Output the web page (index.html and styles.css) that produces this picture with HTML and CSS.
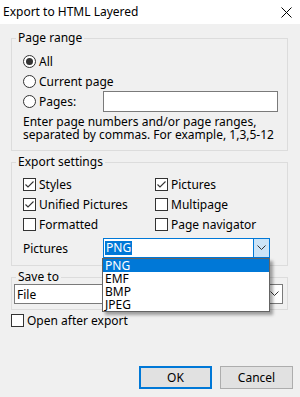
FILE: index.html
```html
<!DOCTYPE html>
<html lang="en">
<head>
<meta charset="utf-8">
<title>Export to HTML Layered</title>
<link rel="stylesheet" href="styles.css">
</head>
<body>
<div class="window">
  <header class="titlebar">
    <span class="title">Export to HTML Layered</span>
    <svg class="close" width="11" height="11" viewBox="0 0 11 11"><path d="M0.5 0.5 L10.5 10.5 M10.5 0.5 L0.5 10.5" stroke="#000" stroke-width="1" fill="none"/></svg>
  </header>
  <main class="content">
    <fieldset class="group range">
      <legend>Page range</legend>
      <div class="group-body range-body">
        <label class="opt"><span class="radio checked"></span>All</label>
        <label class="opt"><span class="radio"></span>Current page</label>
        <div class="field-row pages-row">
          <label class="opt"><span class="radio"></span>Pages:</label>
          <span class="textbox"></span>
        </div>
        <p class="hint">Enter page numbers and/or page ranges,<br>separated by commas. For example, 1,3,5-12</p>
      </div>
    </fieldset>

    <fieldset class="group export">
      <legend>Export settings</legend>
      <div class="group-body export-body">
        <div class="checks">
          <label class="opt"><span class="check"><svg viewBox="0 0 11 11"><path d="M1.5 5.5 L4 8 L9.5 2.5" stroke="#333" stroke-width="1.1" fill="none"/></svg></span>Styles</label>
          <label class="opt"><span class="check"><svg viewBox="0 0 11 11"><path d="M1.5 5.5 L4 8 L9.5 2.5" stroke="#333" stroke-width="1.1" fill="none"/></svg></span>Pictures</label>
          <label class="opt"><span class="check"><svg viewBox="0 0 11 11"><path d="M1.5 5.5 L4 8 L9.5 2.5" stroke="#333" stroke-width="1.1" fill="none"/></svg></span>Unified Pictures</label>
          <label class="opt"><span class="check"></span>Multipage</label>
          <label class="opt"><span class="check"></span>Formatted</label>
          <label class="opt"><span class="check"></span>Page navigator</label>
        </div>
        <div class="field-row pictures-row">
          <span class="field-label">Pictures</span>
          <div class="combo open">
            <span class="combo-value"><span class="selected-text">PNG</span></span>
            <span class="combo-btn"><svg width="9" height="6" viewBox="0 0 9 6"><path d="M0.5 0.5 L4.5 4.5 L8.5 0.5" stroke="#333" stroke-width="1" fill="none"/></svg></span>
            <ul class="dropdown">
              <li class="active">PNG</li>
              <li>EMF</li>
              <li>BMP</li>
              <li>JPEG</li>
            </ul>
          </div>
        </div>
      </div>
    </fieldset>

    <fieldset class="group save">
      <legend>Save to</legend>
      <div class="group-body save-body">
        <div class="combo file">
          <span class="combo-value">File</span>
          <span class="combo-btn plain"><svg width="9" height="6" viewBox="0 0 9 6"><path d="M0.5 0.5 L4.5 4.5 L8.5 0.5" stroke="#333" stroke-width="1" fill="none"/></svg></span>
        </div>
      </div>
    </fieldset>

    <label class="opt open-after"><span class="check"></span>Open after export</label>

    <div class="buttons">
      <button class="btn default">OK</button>
      <button class="btn">Cancel</button>
    </div>
  </main>
</div>
</body>
</html>
```
FILE: styles.css
```css
* { box-sizing: border-box; }

body {
  margin: 0;
  font-family: "Noto Sans", "Segoe UI", sans-serif;
  font-size: 12px;
  color: #000;
}

.window {
  width: 300px;
  height: 397px;
  background: #f0f0f0;
  display: flex;
  flex-direction: column;
}

.titlebar {
  height: 24px;
  flex: none;
  background: #fff;
  display: flex;
  align-items: center;
  justify-content: space-between;
  padding: 0 8px 0 3px;
}

.title { line-height: 16px; }

.close { display: block; }

.content {
  flex: 1;
  display: flex;
  flex-direction: column;
  padding: 0 12px 0 11px;
}

.group {
  margin: 0;
  padding: 0;
  border: 1px solid #dcdcdc;
  min-width: 0;
}

.group legend {
  margin-left: 4px;
  padding: 0 2px;
  line-height: 14px;
}

.range { margin-top: 7px; }
.export { margin-top: 4px; }
.save { margin-top: 4px; }

.range-body { padding: 6px 8px 9px 11px; }
.export-body { padding: 5px 8px 7px 11px; }
.save-body { padding: 0 4px 5px 2px; }

.opt {
  display: flex;
  align-items: center;
  height: 20px;
  white-space: nowrap;
}

.radio {
  width: 13px;
  height: 13px;
  border: 1px solid #333;
  border-radius: 50%;
  background: #fff;
  margin-right: 3px;
  display: flex;
  align-items: center;
  justify-content: center;
  flex: none;
}

.radio.checked::after {
  content: "";
  width: 7px;
  height: 7px;
  border-radius: 50%;
  background: #333;
}

.check {
  width: 13px;
  height: 13px;
  border: 1px solid #333;
  background: #fff;
  margin-right: 3px;
  flex: none;
  display: block;
}

.check svg { display: block; width: 11px; height: 11px; }

.field-row {
  display: grid;
  grid-template-columns: 80px auto;
  align-items: center;
}

.pages-row { height: 21px; }

.textbox {
  width: 175px;
  height: 21px;
  border: 1px solid #7a7a7a;
  background: #fff;
}

.hint {
  margin: 3px 0 0;
  line-height: 13px;
  white-space: nowrap;
}

.checks {
  display: grid;
  grid-template-columns: 132px auto;
}

.checks .opt { height: 20px; }

.pictures-row { margin-top: 4px; }

.combo {
  position: relative;
  height: 20px;
  border: 1px solid #7a7a7a;
  background: #fff;
  display: flex;
  align-items: stretch;
}

.combo.open {
  width: 167px;
  border-color: #0078d7;
}

.combo-value {
  flex: 1;
  display: flex;
  align-items: center;
  padding-left: 1px;
}

.file .combo-value { padding-left: 2px; }

.selected-text {
  background: #0078d7;
  color: #fff;
  line-height: 14px;
  padding: 0 1px;
}

.combo-btn {
  width: 16px;
  flex: none;
  display: flex;
  align-items: center;
  justify-content: center;
  background: #cce4f7;
  border-left: 1px solid #0078d7;
}

.combo-btn.plain {
  background: transparent;
  border-left: none;
}

.dropdown {
  position: absolute;
  left: -2px;
  top: 19px;
  width: 168px;
  margin: 0;
  padding: 0;
  list-style: none;
  background: #fff;
  border: 1px solid #646464;
  box-shadow: 3px 3px 3px rgba(0, 0, 0, 0.35);
  z-index: 2;
}

.dropdown li {
  height: 13px;
  line-height: 13px;
  padding-left: 2px;
}

.dropdown li.active {
  background: #0078d7;
  color: #fff;
}

.open-after { margin-top: 0; }

.buttons {
  margin-top: auto;
  margin-right: -5px;
  margin-bottom: 8px;
  display: flex;
  justify-content: flex-end;
  gap: 8px;
}

.btn {
  width: 73px;
  height: 23px;
  font: inherit;
  color: #000;
  background: #e1e1e1;
  border: 1px solid #adadad;
  padding: 0;
}

.btn.default { border: 2px solid #0078d7; }
```
